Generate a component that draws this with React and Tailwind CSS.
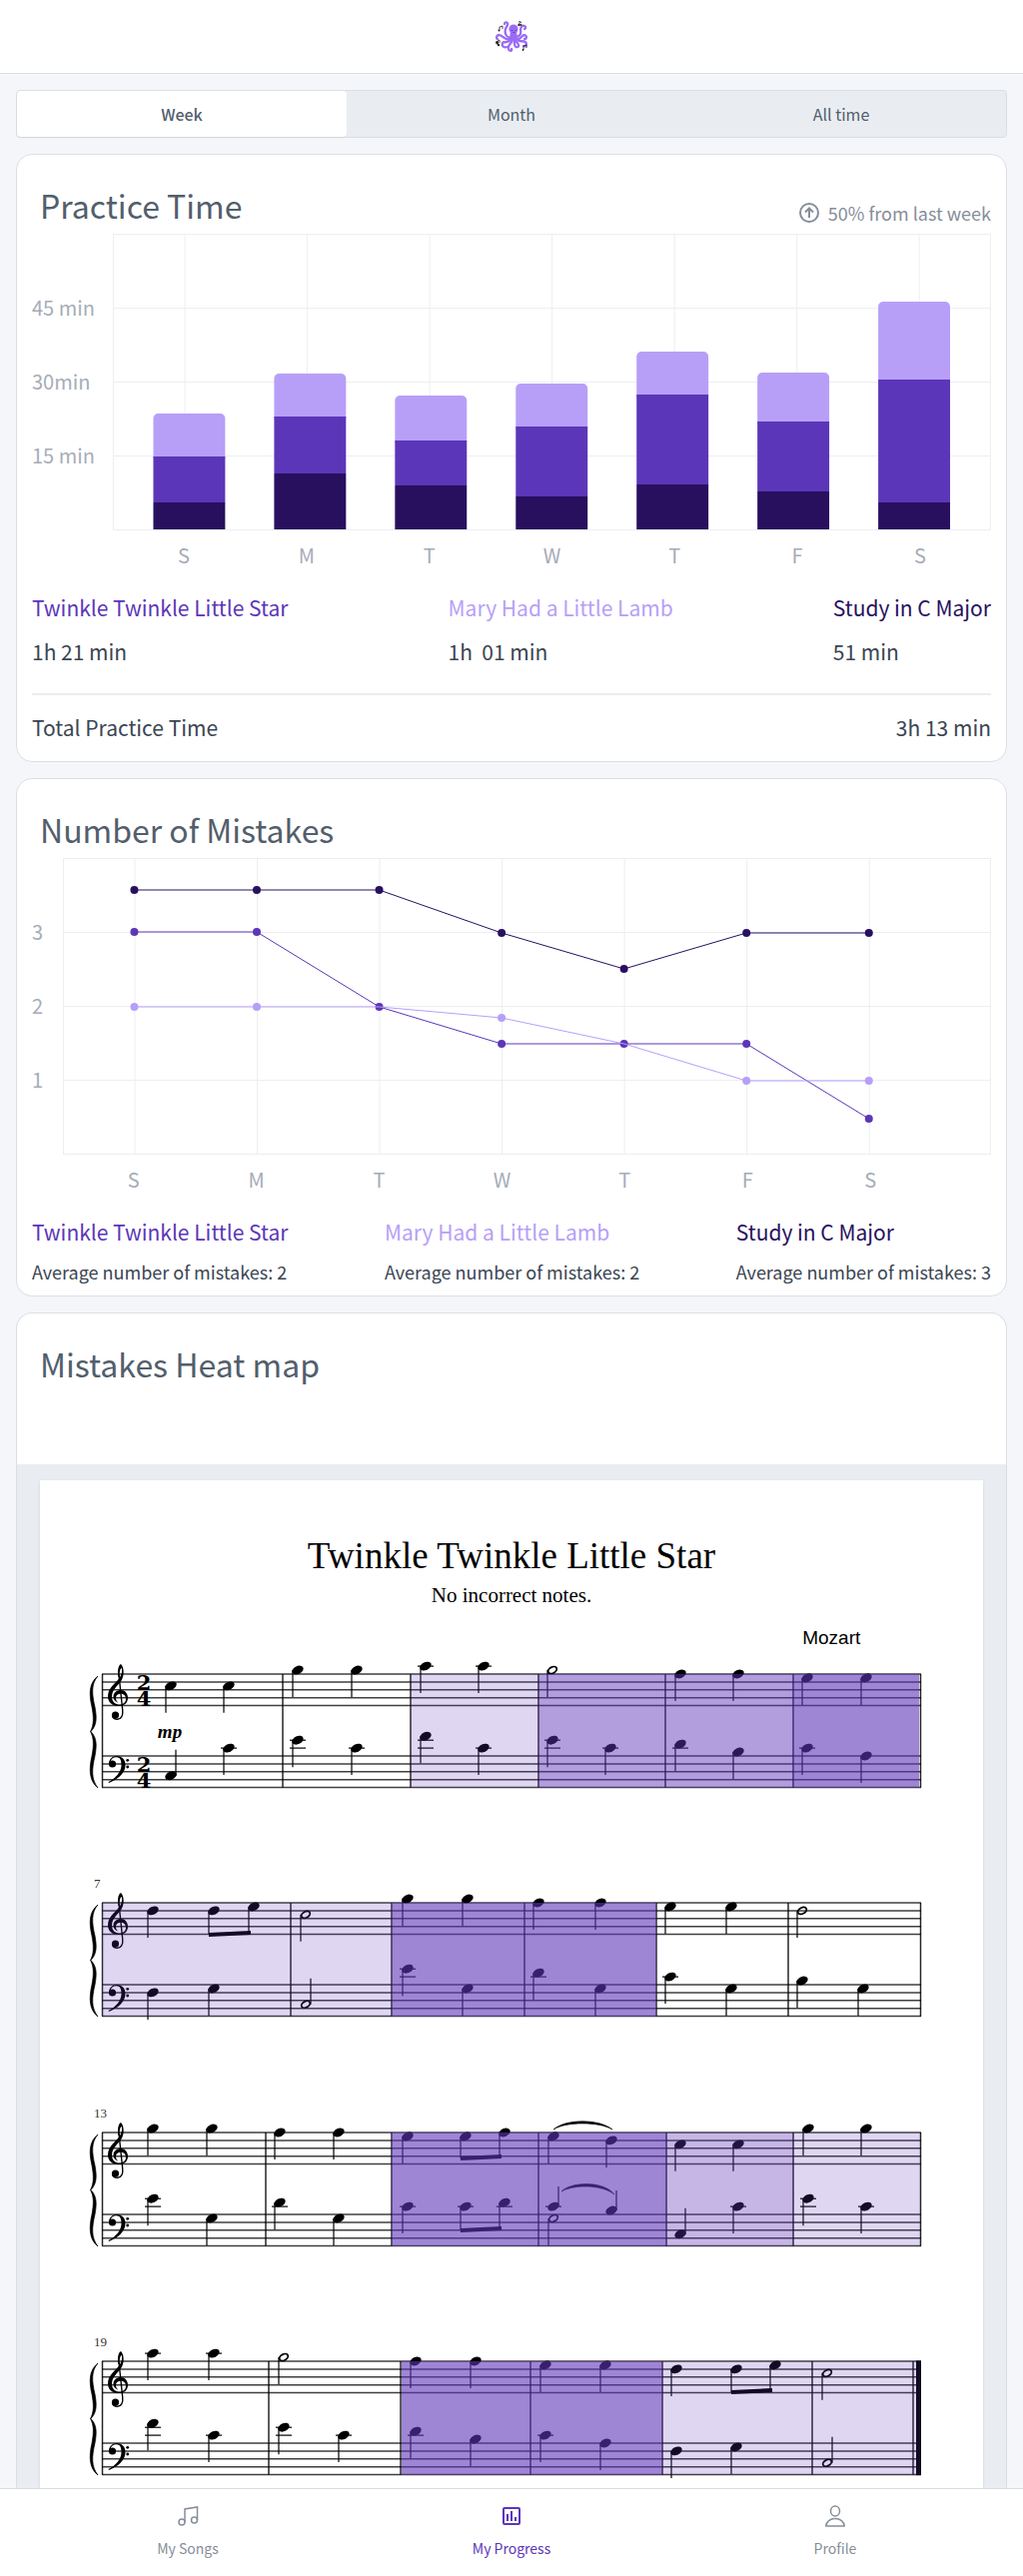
import React from "react";

const DAYS = ["S", "M", "T", "W", "T", "F", "S"];
const DARK = "#28105f";
const MID = "#5c36b8";
const LIGHT = "#b79ff8";
const GRID = "#eceef2";

/* light, mid and dark segment heights per day */
const BARS = [
  [43, 46, 27],
  [43, 57, 56],
  [45, 45, 44],
  [43, 70, 33],
  [43, 90, 45],
  [49, 70, 38],
  [78, 123, 27],
];

const SERIES = [
  { color: DARK, values: [31, 31, 31, 74, 110, 74, 74] },
  { color: MID, values: [73, 73, 148, 185, 185, 185, 260] },
  { color: LIGHT, values: [148, 148, 148, 159, 185, 222, 222] },
];

function Octopus() {
  return (
    <svg width="32" height="32" viewBox="0 0 32 32" fill="none" role="img" aria-label="Octopus logo">
      <g stroke="#9b6bf6" strokeWidth="2.3" strokeLinecap="round" strokeLinejoin="round">
        <path d="M15 17C10 16 9 12 10 8C11 5 13 4 12 2C11 1 9 1 9 3" />
        <path d="M21 16C25 15 26 12 25 9C25 6 27 4 29 5C31 6 30 8 29 8" />
        <path d="M15 18C9 20 8 15 4 14C1 14 0 17 2 18" />
        <path d="M21 18C26 19 26 14 29 14C32 15 31 18 29 18" />
        <path d="M15 19C11 23 8 20 7 22C6 25 8 27 11 26" />
        <path d="M17 19C15 24 12 24 13 28C14 31 17 30 16 28" />
        <path d="M19 19C18 24 20 27 22 26C25 25 22 22 19 19" />
        <path d="M21 18C24 22 27 19 30 21C32 24 30 26 28 25" />
      </g>
      <circle cx="18" cy="8" r="4.6" fill="#9b6bf6" />
      <path d="M15 9L21 9L22 18Q18 22 14 18Z" fill="#9b6bf6" />
      <path d="M16 9.5h1M19.500 9.500h1M17.500 11.500h1.500" stroke="#4b2a9b" strokeWidth="0.8" />
      <g stroke="#222" strokeWidth="0.8">
        <path d="M4 9V6l3-1v3" />
        <path d="M24 4V0l2 2" />
        <path d="M2 24v-4l2-1v3" />
        <path d="M28 29v-4l3-1v3" />
      </g>
      <g fill="#222">
        <circle cx="3.500" cy="9.500" r="1" />
        <circle cx="23.500" cy="4" r="1.200" />
        <circle cx="25.500" cy="4" r="0.900" />
        <circle cx="1.500" cy="21.500" r="1.500" />
        <circle cx="3" cy="24" r="1.200" />
        <circle cx="27.500" cy="29" r="0.900" />
      </g>
    </svg>
  );
}

function Tabs() {
  const items = ["Week", "Month", "All time"];
  return (
    <div role="tablist" className="grid h-12 grid-cols-3 rounded border border-[#dbdfe4] bg-[#e9edf2] text-base leading-6 text-[#525e6c]">
      {items.map((t, i) => (
        <button
          key={t}
          role="tab"
          aria-selected={i === 0}
          className={i === 0 ? "rounded bg-white font-medium shadow-xs" : "font-normal"}
        >
          {t}
        </button>
      ))}
    </div>
  );
}

function Card({ title, extra, className, children }) {
  return (
    <section className={"rounded-2xl border border-[#dbdfe4] bg-white " + (className || "")}>
      <div className="flex h-[79px] items-end justify-between pr-[15px] pb-[7px] pl-[23px]">
        <h2 className="pb-0.5 text-[32px] leading-10 text-[#525e6c]">{title}</h2>
        {extra}
      </div>
      {children}
    </section>
  );
}

function Plot({ labels, axisClass, daysClass, first, step, children }) {
  return (
    <div className="flex px-[15px] text-xl leading-7 text-[#a6acb8]">
      <div className={"shrink-0 pt-[37px] " + axisClass}>
        {labels.map((l) => (
          <div key={l} className="flex h-[74px] items-center">
            {l}
          </div>
        ))}
      </div>
      <div className="min-w-0 flex-1">
        <svg className="block h-[297px] w-full border" style={{ borderColor: GRID }}>
          {[73, 147, 221].map((y) => (
            <rect key={y} x="0" y={y} width="100%" height="1" fill={GRID} />
          ))}
          {DAYS.map((d, i) => (
            <rect key={i} x={first + i * step + "%"} y="0" width="1" height="100%" fill={GRID} />
          ))}
          {children}
        </svg>
        <div className={"mt-[11px] grid grid-cols-7 text-center " + daysClass}>
          {DAYS.map((d, i) => (
            <span key={i}>{d}</span>
          ))}
        </div>
      </div>
    </div>
  );
}

function PracticeTime() {
  return (
    <Card
      title="Practice Time"
      extra={
        <p className="flex items-center gap-2 text-lg leading-7 text-[#868e99]">
          <svg width="22" height="22" viewBox="0 0 22 22" fill="none" stroke="currentColor" strokeWidth="2" aria-hidden="true">
            <circle cx="11" cy="11" r="9" />
            <path d="M11 16V7M7 10.500L11 6.500L15 10.500" />
          </svg>
          50% from last week
        </p>
      }
    >
      <Plot labels={["45 min", "30min", "15 min"]} axisClass="w-[81px]" daysClass="px-[1.1%]" first={8.05} step={13.97}>
        {BARS.map(([a, b, c], i) => {
          const x = 4.5 + i * 13.79 + "%";
          const top = 295 - a - b - c;
          return (
            <g key={i}>
              <rect x={x} y={top} width="8.2%" height={a + 6} rx="5" fill={LIGHT} />
              <rect x={x} y={top + a} width="8.2%" height={b} fill={MID} />
              <rect x={x} y={295 - c} width="8.2%" height={c} fill={DARK} />
            </g>
          );
        })}
      </Plot>
      <div className="mx-[15px] mt-6 flex justify-between border-b-2 border-[#ebecf2] pb-7 text-[21px] leading-7 text-[#3a4552]">
        <div>
          <h3 className="text-[#5c36b8]">Twinkle Twinkle Little Star</h3>
          <p className="mt-4">1h 21 min</p>
        </div>
        <div>
          <h3 className="text-[#b79ff8]">Mary Had a Little Lamb</h3>
          <p className="mt-4 whitespace-pre">1h  01 min</p>
        </div>
        <div>
          <h3 className="text-[#28105f]">Study in C Major</h3>
          <p className="mt-4">51 min</p>
        </div>
      </div>
      <div className="flex justify-between px-[15px] pt-[18px] pb-5 text-[21px] leading-7 text-[#3a4552]">
        <span>Total Practice Time</span>
        <span>3h 13 min</span>
      </div>
    </Card>
  );
}

function Mistakes() {
  const x = (i) => 7.6 + i * 13.22 + "%";
  return (
    <Card title="Number of Mistakes">
      <Plot labels={["3", "2", "1"]} axisClass="w-[31px]" daysClass="pr-[6.400%] pl-[1%]" first={7.6} step={13.22}>
        {SERIES.map((s) => (
          <g key={s.color} stroke={s.color} fill={s.color}>
            {s.values.map((y, i) => (
              <g key={i}>
                {i < 6 && <line x1={x(i)} y1={y} x2={x(i + 1)} y2={s.values[i + 1]} strokeWidth="1" />}
                {!(s.color === LIGHT && (i === 2 || i === 4)) && <circle cx={x(i)} cy={y} r="4" stroke="none" />}
              </g>
            ))}
          </g>
        ))}
      </Plot>
      <div className="mt-6 flex justify-between px-[15px] pb-2.5 text-[#3a4552]">
        <div>
          <h3 className="text-[21px] leading-7 text-[#5c36b8]">Twinkle Twinkle Little Star</h3>
          <p className="mt-3 text-lg leading-7">Average number of mistakes: 2</p>
        </div>
        <div>
          <h3 className="text-[21px] leading-7 text-[#b79ff8]">Mary Had a Little Lamb</h3>
          <p className="mt-3 text-lg leading-7">Average number of mistakes: 2</p>
        </div>
        <div>
          <h3 className="text-[21px] leading-7 text-[#28105f]">Study in C Major</h3>
          <p className="mt-3 text-lg leading-7">Average number of mistakes: 3</p>
        </div>
      </div>
    </Card>
  );
}

/* Score geometry: note = [x, step below top staff line, flags]; flags: h half, u stem up, b beamed, s short stem */
const GAP = 7.9;
const BASS = 82;
const BOTTOM = BASS + 4 * GAP;

const SYSTEMS = [
  {
    y: 24,
    bars: [283, 411, 539, 666, 794],
    heat: [[411, 539, 0.2], [539, 666, 0.48], [666, 794, 0.48], [794, 920, 0.6]],
    treble: [[171, 3], [229, 3], [298, -1], [357, -1], [426, -2], [484, -2], [553, -1, "h"], [681, 0], [739, 0], [808, 1], [867, 1]],
    bass: [[171, 5, "u"], [229, -2], [298, -4], [357, -2], [426, -5], [484, -2], [553, -4], [611, -2], [681, -3], [739, -1], [808, -2], [867, 0]],
    beams: [],
  },
  {
    y: 253,
    num: "7",
    bars: [291, 392, 525, 657, 789],
    heat: [[102, 392, 0.2], [392, 657, 0.6]],
    treble: [[153, 2], [214, 2, "b"], [254, 1, "b"], [306, 3, "h"], [408, -1], [468, -1], [539, 0], [601, 0], [671, 1], [732, 1], [803, 2, "h"]],
    bass: [[153, 2], [214, 1], [306, 5, "hu"], [408, -4], [468, 1], [539, -3], [601, 1], [671, -2], [732, 1], [803, -1], [864, 1]],
    beams: [[210, 250, 32, 30]],
  },
  {
    y: 483,
    num: "13",
    bars: [266, 392, 539, 667, 794],
    heat: [[392, 667, 0.6], [667, 794, 0.36], [794, 921, 0.2]],
    treble: [[153, -1], [212, -1], [280, 0], [339, 0], [408, 1], [466, 1, "b"], [505, 0, "b"], [554, 1], [612, 2], [681, 3], [739, 3], [809, -1], [867, -1]],
    bass: [[153, -4], [212, 1], [280, -3], [339, 1], [408, -2], [466, -2, "b"], [505, -3, "b"], [554, -2, "us"], [554, 1, "h"], [612, -1, "us"], [681, 5, "u"], [739, -2], [809, -4], [867, -2]],
    beams: [[462, 501, 26, 24], [462, 501, 98, 96]],
    slurs: ["M554 -3C566 -14 600 -14 613 -3C600 -11 566 -11 554 -3Z", "M562 59C572 49 604 48 615 62C603 52 574 52 562 59Z"],
  },
  {
    y: 712,
    num: "19",
    bars: [269, 401, 531, 663, 813, 914],
    heat: [[402, 663, 0.6], [663, 921, 0.2]],
    treble: [[153, -2], [214, -2], [284, -1, "h"], [416, 0], [476, 0], [546, 1], [606, 1], [677, 2], [737, 2, "b"], [776, 1, "b"], [828, 3, "h"]],
    bass: [[153, -5], [214, -2], [284, -4], [344, -2], [416, -3], [476, -1], [546, -2], [606, 0], [677, 2], [737, 1], [828, 5, "hu"]],
    beams: [[733, 772, 31, 29]],
    end: true,
  },
];

function Note({ x, step, flags = "", base, beams }) {
  const y = base + (step * GAP) / 2;
  const up = flags.includes("u");
  const sx = up ? x + 5 : x - 5;
  let end = up ? y - (flags.includes("s") ? 20 : 26) : y + 27;
  if (flags.includes("b")) {
    const beam = beams.find((b) => (Math.abs(b[0] - sx) < 3 || Math.abs(b[1] - sx) < 3) && b[2] > y && b[2] < y + 50);
    if (beam) end = beam[2];
  }
  const ledgers = [-2, -4].filter((l) => step <= l);
  return (
    <g>
      {ledgers.map((l) => (
        <path key={l} d={`M${x - 8} ${base + (l * GAP) / 2}h16`} stroke="#000" strokeWidth="1.200" />
      ))}
      <path d={`M${sx} ${y}V${end}`} stroke="#000" strokeWidth="1.200" />
      {flags.includes("h") ? (
        <ellipse cx={x} cy={y} rx="4.600" ry="3" fill="none" stroke="#000" strokeWidth="1.800" transform={`rotate(-28 ${x} ${y})`} />
      ) : (
        <ellipse cx={x} cy={y} rx="6" ry="4" transform={`rotate(-25 ${x} ${y})`} />
      )}
    </g>
  );
}

function TrebleClef() {
  return (
    <g>
      <path d="M118.5 3C117 -4 119 -9.5 121 -10C124 -7 125 1 121.500 6.500C117 12.500 112 16 112 23C112 28 116 30.500 119.500 30.500C123.500 30.500 126 28 126 25C126 21.500 123.500 19.800 121 19.800C117.500 19.800 116 22 116 24C116 26 117 27.500 118.500 28.500C115 27.800 113.500 25 113.500 22.500C113.500 18.500 117 16 121 16C125 16 128 19.500 128 24C128 29 124 32 119 32C112 32 108 28 108 22.500C108 14 115 10 119.500 4C122 0 122.500 -3 121.800 -6C120 -5.500 119.500 -1 120 3Z" />
      <path d="M119 1L122.700 36C123.500 42 121 45.300 117.500 45.300C115 45.300 113 44 112.500 41.500" fill="none" stroke="#000" strokeWidth="1.400" />
      <circle cx="115.500" cy="41" r="3.600" />
    </g>
  );
}

function BassClef() {
  return (
    <g transform={`translate(0 ${BASS})`}>
      <path d="M109 8C109 3 112.500 0 117 0C122 0 125.500 3.500 125.500 9C125.500 17 118 23.500 109 27L108.500 26C116 22 121.500 16 121.500 9C121.500 4 120 1.300 116.500 1.300C113.500 1.300 111 3 110.500 6Z" />
      <circle cx="112.500" cy="8" r="3.600" />
      <circle cx="127.700" cy="4.300" r="1.400" />
      <circle cx="127.700" cy="11" r="1.400" />
    </g>
  );
}

function TimeSignature({ y }) {
  return (
    <text fontFamily="DejaVu Serif, serif" fontWeight="bold" fontSize="21" textAnchor="middle">
      <tspan x="144" y={y + 16}>2</tspan>
      <tspan x="144" y={y + 32}>4</tspan>
    </text>
  );
}

function System({ s, first }) {
  const lines = [0, 1, 2, 3, 4].flatMap((i) => [i * GAP, BASS + i * GAP]);
  return (
    <g transform={`translate(0 ${s.y})`}>
      {lines.map((y) => (
        <path key={y} d={`M102 ${y}H922`} stroke="#000" strokeWidth="1.500" opacity="0.75" />
      ))}
      {[102.5, ...s.bars].map((x) => (
        <path key={x} d={`M${x} 0V${BOTTOM}`} stroke="#000" strokeWidth="1.500" opacity="0.85" />
      ))}
      {s.end ? (
        <rect x="917" y="-0.500" width="5" height={BOTTOM + 1} />
      ) : (
        <path d={`M921.500 0V${BOTTOM}`} stroke="#000" strokeWidth="1.500" opacity="0.85" />
      )}
      <path
        d="M98 2C91 10 92 20 95 33C97 44 97 51 91 57.500C97 64 97 71 95 82C92 95 91 105 98 114C89 107 89 95 92 82C94 71 94 64 90.500 57.500C94 51 94 44 92 33C89 20 89 9 98 2Z"
        stroke="#000"
        strokeWidth="0.700"
      />
      <TrebleClef />
      <BassClef />
      {s.num && (
        <text x="94" y="-15" fontFamily="Liberation Serif, serif" fontSize="13" fill="#333">
          {s.num}
        </text>
      )}
      {first && (
        <g>
          <TimeSignature y={0} />
          <TimeSignature y={BASS} />
          <text x="170" y="64" fontFamily="Liberation Serif, serif" fontWeight="bold" fontStyle="italic" fontSize="19" textAnchor="middle">
            mp
          </text>
        </g>
      )}
      {s.treble.map((n, i) => (
        <Note key={"t" + i} x={n[0]} step={n[1]} flags={n[2]} base={0} beams={s.beams} />
      ))}
      {s.bass.map((n, i) => (
        <Note key={"b" + i} x={n[0]} step={n[1]} flags={n[2]} base={BASS} beams={s.beams} />
      ))}
      {s.beams.map(([x1, x2, y1, y2]) => (
        <path key={y1} d={`M${x1 - 1} ${y1 - 2}L${x2 + 1} ${y2 - 2}V${y2 + 2}L${x1 - 1} ${y1 + 2}Z`} />
      ))}
      {(s.slurs || []).map((d) => (
        <path key={d} d={d} stroke="#000" strokeWidth="0.600" />
      ))}
      {s.heat.map(([x1, x2, a]) => (
        <rect key={x1} x={x1} y="0" width={x2 - x1} height={BOTTOM} fill="#5e35b8" opacity={a} />
      ))}
    </g>
  );
}

function HeatMap() {
  return (
    <Card title="Mistakes Heat map" className="flex flex-1 flex-col rounded-b-none border-b-0">
      <div className="mt-[72px] flex flex-1 flex-col bg-[#e9edf1] px-[23px] pt-4">
        <article className="flex-1 bg-white pt-[54px] text-black shadow">
          <h3 className="text-center font-['Liberation_Serif',serif] text-[37px] leading-[44px]">Twinkle Twinkle Little Star</h3>
          <p className="mt-[3px] text-center font-['Liberation_Serif',serif] text-[21px] leading-7">No incorrect notes.</p>
          <p className="mt-[17px] pr-[13%] text-right font-['Liberation_Sans',sans-serif] text-[19px] leading-6">Mozart</p>
          <svg viewBox="40 0 944 839" className="block w-full" role="img" aria-label="Sheet music">
            {SYSTEMS.map((s, i) => (
              <System key={s.y} s={s} first={i === 0} />
            ))}
          </svg>
        </article>
      </div>
    </Card>
  );
}

function BottomNav() {
  const item = "flex flex-col items-center pt-[15px] text-sm leading-6";
  return (
    <nav className="sticky bottom-0 grid h-[88px] grid-cols-3 border-t border-[#dbdcdf] bg-white px-[26px] text-[#868e99]">
      <a href="#songs" className={item}>
        <svg width="24" height="24" viewBox="0 0 24 24" fill="none" stroke="currentColor" strokeWidth="1.500" aria-hidden="true">
          <circle cx="6" cy="18" r="3" />
          <circle cx="18.500" cy="16" r="3" />
          <path d="M9 18V5L21.500 3V16" />
        </svg>
        <span className="mt-2">My Songs</span>
      </a>
      <a href="#progress" aria-current="page" className={item + " text-[#5c36b8]"}>
        <svg width="24" height="24" viewBox="0 0 24 24" fill="none" stroke="currentColor" strokeWidth="2" strokeLinejoin="round" aria-hidden="true">
          <rect x="4" y="4" width="16" height="16" rx="1" />
          <path d="M8 17V10M12 17V7M16 17V13" />
        </svg>
        <span className="mt-2">My Progress</span>
      </a>
      <a href="#profile" className={item}>
        <svg width="24" height="24" viewBox="0 0 24 24" fill="none" stroke="currentColor" strokeWidth="1.500" strokeLinejoin="round" aria-hidden="true">
          <ellipse cx="12" cy="7" rx="4.500" ry="5" />
          <path d="M2.750 22C3 17.500 7 14.500 12 14.500S21 17.500 21.250 22Z" />
        </svg>
        <span className="mt-2">Profile</span>
      </a>
    </nav>
  );
}

export default function App() {
  return (
    <div className="flex min-h-screen flex-col bg-[#f4f6fa] font-['Noto_Sans_CJK_SC',sans-serif]">
      <header className="flex h-[74px] items-center justify-center border-b border-[#dbdfe4] bg-white">
        <Octopus />
      </header>
      <main className="flex flex-1 flex-col gap-4 px-4 pt-4">
        <Tabs />
        <PracticeTime />
        <Mistakes />
        <HeatMap />
      </main>
      <BottomNav />
    </div>
  );
}
